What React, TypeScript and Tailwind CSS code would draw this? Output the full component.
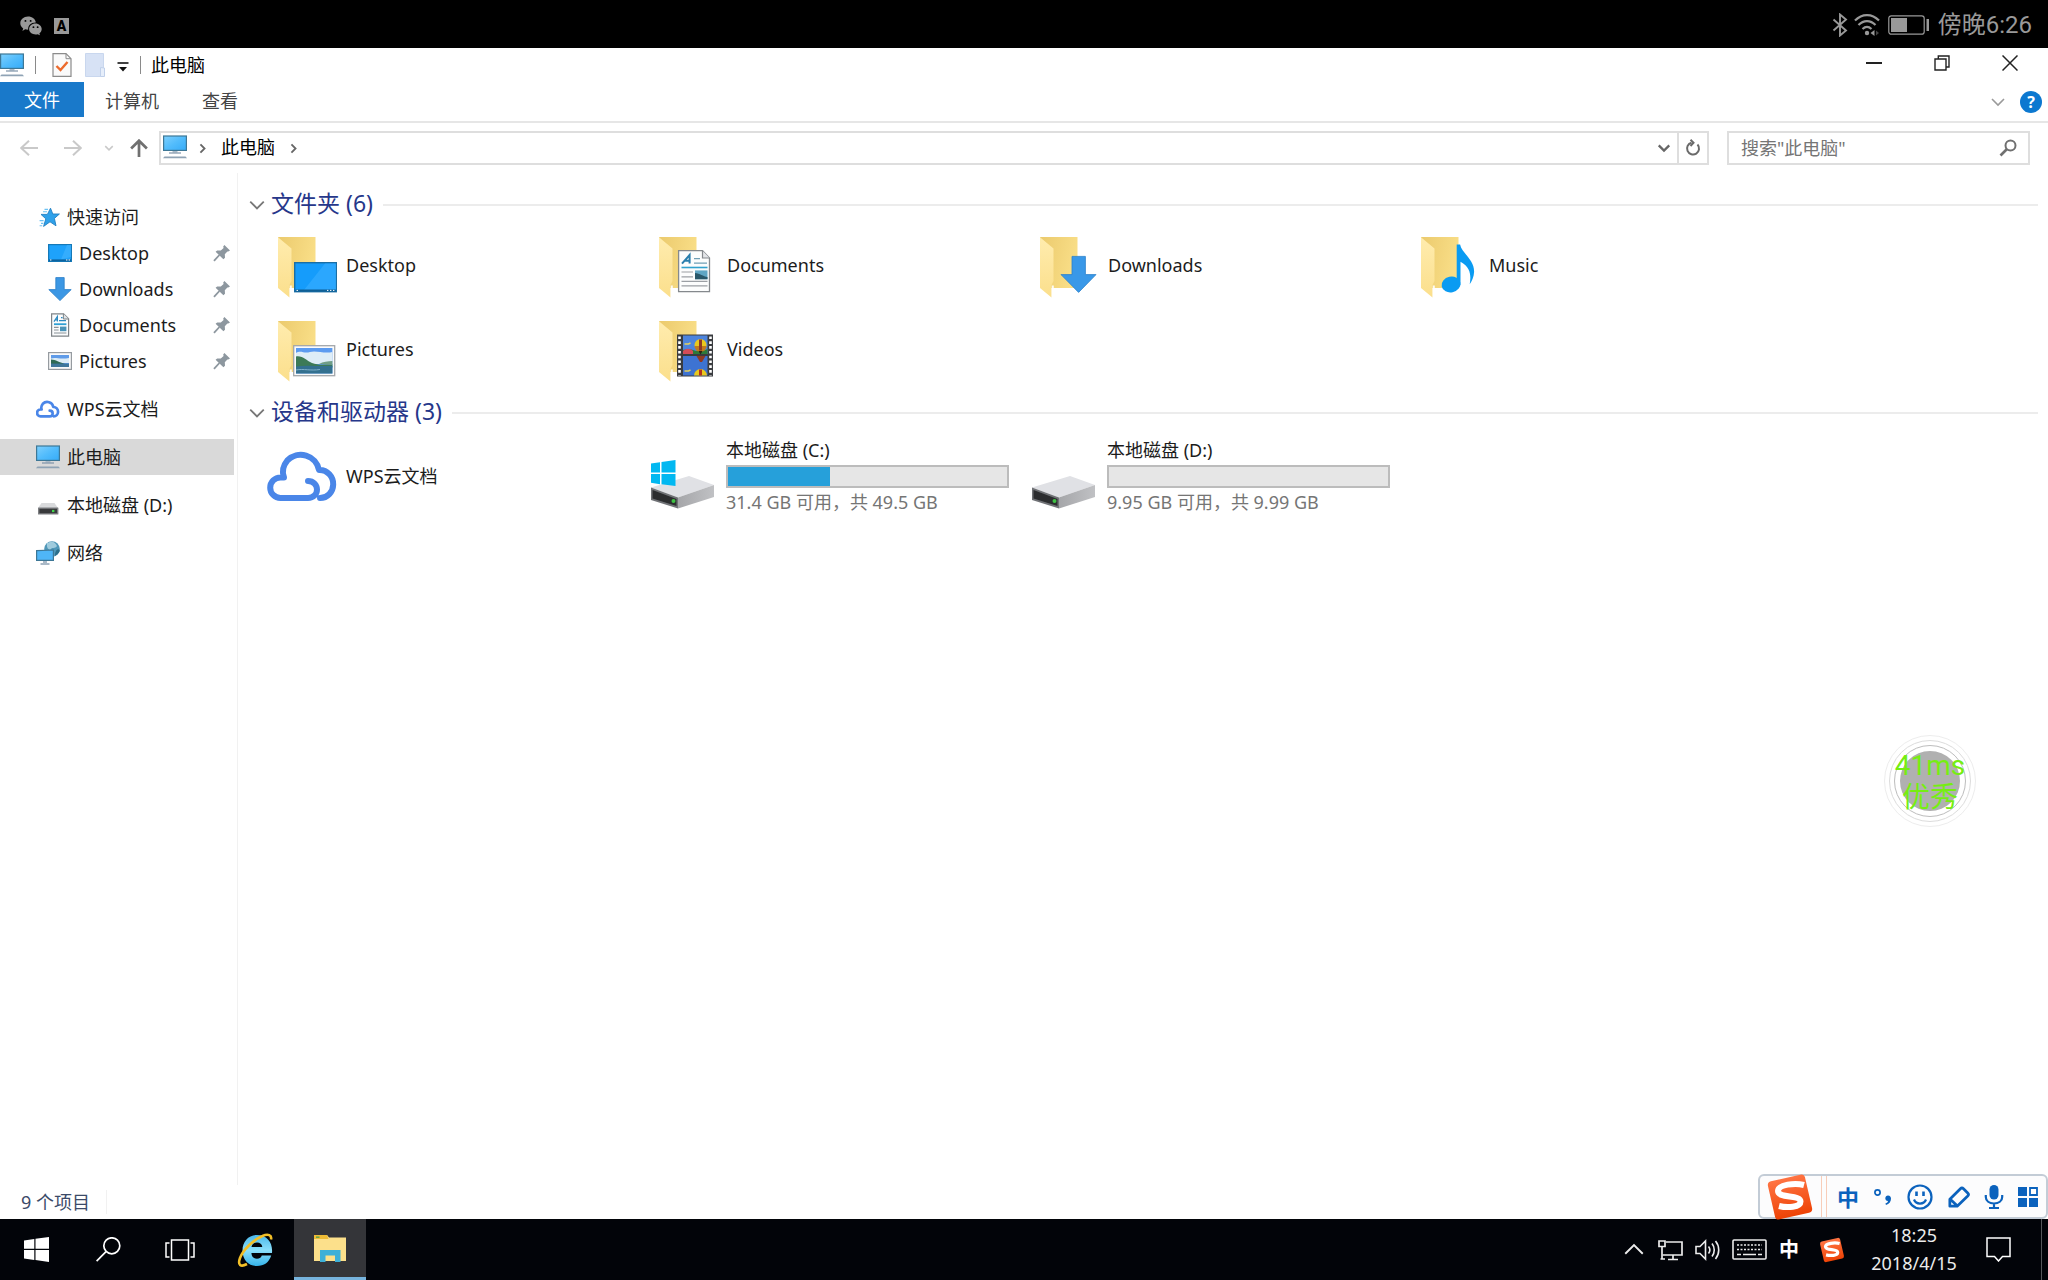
import type { ReactNode } from "react";

type IconProps = { className?: string };

/* ---------- small icons ---------- */

function ComputerIcon({ className = "h-6 w-6" }: IconProps) {
  return (
    <svg viewBox="0 0 24 24" className={className} aria-hidden="true">
      <defs>
        <linearGradient id="screen" x1="0" y1="0" x2="1" y2="1">
          <stop offset="0" stopColor="#7fd0fd" />
          <stop offset="0.5" stopColor="#52bcfc" />
          <stop offset="1" stopColor="#35abf8" />
        </linearGradient>
      </defs>
      <rect x="0.6" y="1" width="22.8" height="14.4" fill="url(#screen)" stroke="#3d7796" strokeWidth="1.2" />
      <path d="M9.5 16h5v1.6h-5z" fill="#aab9c6" />
      <path d="M6 17.4h12v1.2H6z" fill="#7d93a8" />
      <path d="M1.5 21.4h21l1.5 1.8H0z" fill="#8fa3b5" />
    </svg>
  );
}

function DesktopIcon() {
  return (
    <svg viewBox="0 0 24 24" className="h-6 w-6" aria-hidden="true">
      <rect x="0.6" y="3.6" width="22.8" height="16.8" fill="#1ea2fb" stroke="#1579b8" strokeWidth="1.2" />
      <path d="M23 4v12L13 18.4 19 4z" fill="#43b4ff" opacity="0.6" />
      <path d="M1 18.4h22v1.8H1z" fill="#0d639e" />
      <path d="M2 19h1.4M18 19h1.4M20.6 19H22" stroke="#fff" />
    </svg>
  );
}

function DownloadIcon() {
  return (
    <svg viewBox="0 0 24 24" className="h-6 w-6" aria-hidden="true">
      <path d="M7.8 0.6h8.4v12h7L12 23.6 0.8 12.6h7z" fill="#3c97e4" stroke="#2a7dc6" strokeWidth="0.8" />
    </svg>
  );
}

function DocumentIcon() {
  return (
    <svg viewBox="0 0 24 24" className="h-6 w-6" aria-hidden="true">
      <path d="M3.6 0.8h12l5 5v17.4h-17z" fill="#fbfcfd" stroke="#7f8488" strokeWidth="1.2" />
      <path d="M15.4 0.8v5.2h5.2" fill="#dfe3e6" stroke="#7f8488" />
      <path d="M6 8.6 9.4 3.4V8.6M7.4 6.8h2M11 7.6h7M13 4.6h1.6" stroke="#2d8ac0" strokeWidth="1.2" fill="none" />
      <path d="M6 11.2h12.4" stroke="#2fa0d4" strokeWidth="1.8" />
      <path d="M6 14.4h4.6M6 17h4.6M6 20h12.4" stroke="#8a9298" strokeWidth="1.1" />
      <path d="M12 13.6h6.4v4.6H12z" fill="#4a93b8" />
    </svg>
  );
}

function PictureIcon() {
  return (
    <svg viewBox="0 0 24 24" className="h-6 w-6" aria-hidden="true">
      <rect x="0.6" y="3.6" width="22.8" height="16.8" fill="#fafafa" stroke="#969ba0" strokeWidth="1.2" />
      <path d="M3 6h18v12H3z" fill="#5f9be8" />
      <path d="M3 9.6c4-2 8 1 18-.6v5H3z" fill="#dcecf6" />
      <path d="M3 10.6c5 0 8 3 14 4.4H3z" fill="#2f6a54" />
      <path d="M3 14.6h18V18H3z" fill="#40779b" />
    </svg>
  );
}

function StarIcon() {
  return (
    <svg viewBox="0 0 24 24" className="h-6 w-6" aria-hidden="true">
      <path d="M14.5 3.2 16.8 9h6.6l-5 4.4 1.6 7.4-6-4-6.4 4.6 2.2-7.6-4.8-4.4h6.4z" fill="#2fa1ea" stroke="#2380c2" strokeWidth="0.9" />
      <path d="M8.5 4.4H12M7 6.8h4M3.6 15.6h4M5 18.4h2.4M3.6 20.8h2.6" stroke="#6cc2f4" strokeWidth="1.1" />
    </svg>
  );
}

function CloudIcon({ className = "h-6 w-6", stroke = 8 }: { className?: string; stroke?: number }) {
  return (
    <svg viewBox="0 0 72 72" className={className} fill="none" stroke="#4a86e8" strokeLinecap="round" strokeLinejoin="round" aria-hidden="true">
      <path
        d="M41 41c5.500 0 9 4 9 8.500S46.500 58 41 58H13.500A10.300 10.300 0 0 1 13.500 37.400H17c-2-5-1-11.600 3.400-17A18.600 18.600 0 0 1 52 30C60.500 29.600 66.500 37 66.200 44.600 66 52 60.500 58 53 58"
        strokeWidth={stroke}
      />
    </svg>
  );
}

function SmallDriveIcon() {
  return (
    <svg viewBox="0 0 24 24" className="h-6 w-6" aria-hidden="true">
      <path d="M5.500 10h13l3.500 5H2z" fill="#d9dadc" />
      <rect x="2" y="14.500" width="20.400" height="7" rx="0.600" fill="#7d7f82" />
      <rect x="3.400" y="15.800" width="17.600" height="4.400" fill="#38393b" />
      <path d="M16 18h2.400" stroke="#43d44b" strokeWidth="2.200" />
    </svg>
  );
}

function NetworkIcon() {
  return (
    <svg viewBox="0 0 24 24" className="h-6 w-6" aria-hidden="true">
      <circle cx="16" cy="8" r="7.800" fill="#4f97b8" />
      <path d="M12 2c4-3 8 0 9 3-2 3-5 1-6 3s-5 0-4-6z" fill="#9fcbdd" />
      <path d="M20 10c1-2 3-2 3.600-1s-.6 4-4.600 6c0-2 0-3 1-5z" fill="#2c6f8b" />
      <path d="M0.600 9.600 17.400 9v10.400H0.600z" fill="#4fb6f7" stroke="#3d7796" strokeWidth="1.200" />
      <path d="M4.500 23h9M7 21h4" stroke="#8fa3b5" strokeWidth="1.400" />
    </svg>
  );
}

function PinIcon() {
  return (
    <svg viewBox="0 0 18 18" className="h-[18px] w-[18px]" aria-hidden="true">
      <path d="M11.400 1 17 6.400l-1.800 1.200-.8-.2-2.600 2.800.2 3.600-1.600 1.400L2.600 7.800l1.600-1.400 3.600.2L10.600 4l-.4-1.600z" fill="#8d979f" />
      <path d="M6.400 11 1 16.800" stroke="#8d979f" strokeWidth="1.800" />
    </svg>
  );
}

function Chevron({ className = "", d = "m2 5 6 6 6-6", width = 1.6 }: { className?: string; d?: string; width?: number }) {
  return (
    <svg viewBox="0 0 16 16" className={className} fill="none" stroke="currentColor" strokeWidth={width} aria-hidden="true">
      <path d={d} />
    </svg>
  );
}

function SogouIcon({ className = "" }: IconProps) {
  return (
    <svg viewBox="0 0 48 48" className={className} aria-hidden="true">
      <defs>
        <linearGradient id="sogou" x1="0" y1="0" x2="0" y2="1">
          <stop offset="0" stopColor="#ff7443" />
          <stop offset="1" stopColor="#ee4306" />
        </linearGradient>
      </defs>
      <rect x="5" y="4.500" width="38" height="39" rx="4" fill="url(#sogou)" transform="rotate(-13 24 24)" />
      <path
        d="M38 12c-9-2.400-26-.5-26 6 0 7.500 22.500 3.500 22.500 10.500 0 6-13.500 6.500-21.500 4.500"
        fill="none"
        stroke="#fff"
        strokeWidth="6"
      />
    </svg>
  );
}

/* ---------- large tile icons ---------- */

function FolderTile({ children }: { children: ReactNode }) {
  return (
    <svg viewBox="0 0 72 72" className="h-[72px] w-[72px] shrink-0" aria-hidden="true">
      <defs>
        <linearGradient id="folderBack" x1="0" y1="0" x2="1" y2="0.300">
          <stop offset="0" stopColor="#ebca6d" />
          <stop offset="1" stopColor="#f9de87" />
        </linearGradient>
        <linearGradient id="folderFlap" x1="0" y1="0" x2="0" y2="1">
          <stop offset="0" stopColor="#ffecae" />
          <stop offset="1" stopColor="#fbdf8c" />
        </linearGradient>
      </defs>
      <path d="M11 8h37.500v51H22z" fill="url(#folderBack)" />
      <path d="M11 8.200 24.500 19.500V52L22.500 56v12.500L11 59z" fill="url(#folderFlap)" />
      <path d="M22.800 56.500h2v10.500l-2 1.200z" fill="#fff" opacity="0.900" />
      {children}
    </svg>
  );
}

const desktopArt = (
  <>
    <rect x="27.700" y="33.700" width="41.600" height="29" fill="#159cfb" stroke="#1a6ea5" strokeWidth="1.400" />
    <path d="M69 34.400V61H37L58 34.400z" fill="#35adff" opacity="0.700" />
    <path d="M28.400 60.600h40.400v1.800H28.400z" fill="#0f5f95" />
    <path d="M29.500 61.400H31M60 61.400h1.400M63 61.400h1.400M66 61.400h1.400" stroke="#fff" />
  </>
);

const documentArt = (
  <>
    <path d="M30.600 21.700H54.500l7 7.300v33.600H30.600z" fill="#fcfdfd" stroke="#85898d" strokeWidth="1.300" />
    <path d="M54.500 21.700v7.300h7" fill="#e3e5e8" stroke="#85898d" strokeWidth="1.200" />
    <path d="M34 34.600 41.600 26V34.600M36.600 31.800h5" fill="none" stroke="#2a7fae" strokeWidth="2" />
    <path d="M46 29.600h6M46 34.200h13" stroke="#6f9fb5" strokeWidth="1.200" />
    <path d="M33.500 38.500h26" stroke="#31a2ce" strokeWidth="1.600" />
    <path d="M33.500 43h11.500M33.500 47.800h11.500M33.500 52.400h26M33.500 56.800h26" stroke="#9b9fa4" strokeWidth="1.200" />
    <path d="M47 41.400h12.500v8.800H47z" fill="#5fa6c4" />
    <path d="M47 44c5 .4 8 3.500 12.500 4v2.200H47z" fill="#29586a" />
  </>
);

const downloadArt = (
  <path d="M43 27.400h13.400v18.200H67L49.600 63.400 32 45.600h11z" fill="#3998e8" stroke="#2b80c9" strokeWidth="0.800" />
);

const musicArt = (
  <>
    <ellipse cx="41" cy="55.500" rx="9.500" ry="7.800" fill="#0a9bf2" transform="rotate(-12 41 55.500)" />
    <path d="M46.700 15.500h3.400c1.400 8.500 14.400 15 14 27.500-.2 5-2.200 9-4.400 12.200 1-6 2.400-16.500-9.200-22.400V56h-3.800z" fill="#0a9bf2" />
  </>
);

const pictureArt = (
  <>
    <rect x="26.700" y="32.700" width="41" height="30" fill="#fbfbfb" stroke="#a3a7ab" strokeWidth="1.300" />
    <path d="M29 35h36.400v25.500H29z" fill="#5c9bf0" />
    <path d="M29 40c5-3 8 1 14-1s14 2 22.400 0v12H29z" fill="#deedf7" />
    <path d="M29 43.500c7-1 10 4 16 6.500s12 1.500 20.400 1.500v3H29z" fill="#3c7a56" />
    <path d="M52 51c4-2.500 9-2.500 13.400-3v4z" fill="#6f9d86" />
    <path d="M29 53.500c12-2 22 .5 36.400-.8v7.800H29z" fill="#33708f" />
    <path d="M29 57c8-1.500 14 1 24-.5" stroke="#7fb0c9" fill="none" />
  </>
);

const videoArt = (
  <>
    <rect x="29" y="21.500" width="36" height="42" fill="#3a3c40" />
    <path d="M31.500 23.500v39M62.500 23.500v39" stroke="#fff" strokeWidth="2.600" strokeDasharray="2.600 2.200" />
    <path d="M35 22.500h24.500v18.500H35z" fill="#4d84dd" />
    <path d="M35 43h24.500v19.500H35z" fill="#3d73d2" />
    <path d="M35 37c4-1 8-1 10 0s8 2 14.500-1v5H35z" fill="#2d7a39" />
    <path d="M35 38c3-3 7-3 10 0v3H35z" fill="#d34c58" />
    <path d="M36.500 31h4l2-1M36.500 58h4l2-1" stroke="#e3cf5d" strokeWidth="1.400" fill="none" />
    <circle cx="52.500" cy="32" r="6" fill="#e9c81e" />
    <path d="M46.500 33a6 6 0 0 0 12 0z" fill="#c27a1c" />
    <path d="M51 26.500h3v11h-3z" fill="#8f3a24" />
    <path d="M50.500 38h4l-2 3.500z" fill="#2b2412" />
    <path d="M48.500 43h9l-3.500 6h-2z" fill="#8f3a24" />
    <path d="M46 62.500a6.500 6.500 0 0 1 13 0z" fill="#e9c81e" />
    <path d="M51 56.500h3v6h-3z" fill="#b5341c" />
  </>
);

function DriveTile({ system = false }: { system?: boolean }) {
  return (
    <svg viewBox="0 0 72 72" className="h-[72px] w-[72px] shrink-0" aria-hidden="true">
      <defs>
        <linearGradient id="driveSide" x1="0" y1="0" x2="1" y2="0">
          <stop offset="0" stopColor="#a5a6a9" />
          <stop offset="1" stopColor="#c0c1c4" />
        </linearGradient>
      </defs>
      <path d="M3 47.500 41 36l25 9-36 12.500z" fill="#e0e1e5" />
      <path d="M30 57.500 66 45v12L30 68.500z" fill="url(#driveSide)" />
      <path d="M3 47.500l27 10v11L3 60z" fill="#707276" />
      <path d="M4.500 50 28.500 59v7L4.500 58.500z" fill="#2c2d2f" />
      <circle cx="25.500" cy="61" r="2" fill="#3fc144" />
      {system && (
        <path
          d="M3 23.600 12 22.200v10.300H3zM13.500 22 27.500 20v12.500h-14zM3 34h9v10.300L3 42.800zM13.500 34h14v12l-14-1.700z"
          fill="#02b8f1"
        />
      )}
    </svg>
  );
}

/* ---------- data ---------- */

const quickAccess = [
  { name: "Desktop", icon: <DesktopIcon /> },
  { name: "Downloads", icon: <DownloadIcon /> },
  { name: "Documents", icon: <DocumentIcon /> },
  { name: "Pictures", icon: <PictureIcon /> },
];

const places = [
  { name: "WPS云文档", icon: <CloudIcon />, active: false },
  { name: "此电脑", icon: <ComputerIcon />, active: true },
  { name: "本地磁盘 (D:)", icon: <SmallDriveIcon />, active: false },
  { name: "网络", icon: <NetworkIcon />, active: false },
];

const folders = [
  { name: "Desktop", art: desktopArt },
  { name: "Documents", art: documentArt },
  { name: "Downloads", art: downloadArt },
  { name: "Music", art: musicArt },
  { name: "Pictures", art: pictureArt },
  { name: "Videos", art: videoArt },
];

const drives = [
  { name: "本地磁盘 (C:)", free: "31.4 GB 可用，共 49.5 GB", used: 36.6, system: true },
  { name: "本地磁盘 (D:)", free: "9.95 GB 可用，共 9.99 GB", used: 0, system: false },
];

/* ---------- sections ---------- */

function PhoneStatusBar() {
  return (
    <header className="flex h-12 items-center justify-between bg-black pr-4 pl-5 text-[#999999]">
      <div className="flex items-center gap-3 pt-1">
        <svg viewBox="0 0 22 20" className="h-5 w-[22px]" aria-label="WeChat">
          <path d="M8 .5c4.200 0 7.500 2.600 7.800 6-4.600-.2-8 2.900-7.600 7.100-1 .1-2-.1-3-.4L2.400 15l.8-2.600C1.200 11.100.3 9.200.3 7.200.3 3.500 3.700.5 8 .5z" fill="currentColor" />
          <path d="M15.400 7.500c3.600 0 6.300 2.500 6.300 5.500 0 1.800-.9 3.200-2.300 4.300l.5 2-2.200-1.100c-4.600 1-8.600-1.500-8.600-5.200 0-3 2.700-5.500 6.300-5.500z" fill="currentColor" />
          <path d="M5.400 4.900h.1M10.600 4.900h.1M13.400 11.200h.1M17.600 11.200h.1" stroke="#000" strokeWidth="1.800" strokeLinecap="round" />
        </svg>
        <span className="flex h-4 w-[15px] items-center justify-center bg-[#999999] font-['Roboto',sans-serif] text-sm leading-4 font-black text-black">
          A
        </span>
      </div>
      <div className="flex items-center pt-[2px]">
        <svg viewBox="0 0 16 24" className="mr-1.5 h-6 w-4" fill="none" stroke="currentColor" strokeWidth="1.900" aria-label="Bluetooth">
          <path d="m1.500 6.500 12.500 11L8 22.500v-21l6 5-12.500 11" />
        </svg>
        <svg viewBox="0 0 26 24" className="mr-2 h-6 w-[26px]" fill="none" stroke="currentColor" strokeWidth="2.200" aria-label="Wi-Fi">
          <path d="M1 7.500c7-7.300 17-7.300 24 0M4.500 12c5-5.200 12-5.200 17 0M8.500 16c3-2.800 6-2.800 9 0" />
          <circle cx="13" cy="20" r="2.200" fill="currentColor" stroke="none" />
          <path d="m20.500 17-4 3 4 3z" fill="currentColor" stroke="none" />
          <path d="m22 17.500 3 2.500-3 2.500z" fill="#444" stroke="none" />
        </svg>
        <svg viewBox="0 0 42 20" className="mr-2 h-5 w-[42px]" aria-label="Battery">
          <rect x="0.800" y="0.800" width="35.400" height="18.400" rx="2.500" fill="none" stroke="currentColor" strokeWidth="1.200" />
          <path d="M3 3h16v14H3zM38.500 4H41v12h-2.500z" fill="currentColor" />
        </svg>
        <span className="font-['Roboto','Noto_Sans_CJK_SC',sans-serif] text-2xl leading-8">傍晚6:26</span>
      </div>
    </header>
  );
}

function TitleBar() {
  return (
    <div className="flex h-[34px] items-center justify-between pr-1">
      <div className="flex items-center">
        <ComputerIcon />
        <span className="ml-[11px] h-[18px] w-px bg-[#8a8a8a]" />
        <button aria-label="属性" className="ml-4">
          <svg viewBox="0 0 20 24" className="h-6 w-5">
            <path d="M1 .7h13l5 5v17.600H1z" fill="#fafafa" stroke="#8b8b8b" strokeWidth="1.200" />
            <path d="M14 .7v5h5" fill="none" stroke="#8b8b8b" />
            <path d="m4.500 13 4 4 7-8" fill="none" stroke="#ec6a2c" strokeWidth="2.400" />
          </svg>
        </button>
        <button aria-label="新建文件夹" className="ml-[13px]">
          <svg viewBox="0 0 20 24" className="h-6 w-5">
            <path d="M.5.500h18v23H.5z" fill="#d7e2f5" stroke="#c9d7ee" />
            <path d="M15.500 23.500v-9l4 .5v8.500z" fill="#e6eefa" stroke="#c0d0ea" />
          </svg>
        </button>
        <button aria-label="自定义快速访问工具栏" className="ml-3 pt-1">
          <svg viewBox="0 0 12 12" className="h-3 w-3">
            <path d="M.5 2h11" stroke="#111" strokeWidth="1.600" />
            <path d="M2 6h8l-4 4.500z" fill="#111" />
          </svg>
        </button>
        <span className="ml-[11px] h-[18px] w-px bg-[#8a8a8a]" />
        <h1 className="ml-[10px] text-lg leading-6 text-black">此电脑</h1>
      </div>
      <div className="flex h-[30px] self-start">
        <button aria-label="最小化" className="flex w-[68px] items-center justify-center">
          <span className="h-[2px] w-4 bg-[#222]" />
        </button>
        <button aria-label="还原" className="flex w-[68px] items-center justify-center">
          <svg viewBox="0 0 16 16" className="h-4 w-4" fill="none" stroke="#222" strokeWidth="1.400">
            <path d="M1 4h11v11H1zM4.300 4V1H15v11h-3" />
          </svg>
        </button>
        <button aria-label="关闭" className="flex w-[68px] items-center justify-center">
          <svg viewBox="0 0 16 16" className="h-4 w-4" fill="none" stroke="#222" strokeWidth="1.500">
            <path d="m.5.500 15 15M15.500.500l-15 15" />
          </svg>
        </button>
      </div>
    </div>
  );
}

function RibbonTabs() {
  return (
    <nav className="flex h-[41px] items-start justify-between border-b-2 border-[#e6e6e6] text-lg text-[#444444]">
      <div className="flex h-[35px]">
        <button className="w-[84px] bg-[#1979ca] leading-9 text-white">文件</button>
        <button className="w-24 leading-[38px]">计算机</button>
        <button className="w-20 leading-[38px]">查看</button>
      </div>
      <div className="flex h-10 items-center gap-[14px] pr-[6px]">
        <button aria-label="展开功能区" className="text-[#9a9a9a]">
          <Chevron className="h-4 w-4" />
        </button>
        <button aria-label="帮助" className="h-[22px] w-[22px] rounded-full bg-[#0c78d0] text-center text-base leading-[22px] font-bold text-white">
          ?
        </button>
      </div>
    </nav>
  );
}

function AddressBar() {
  return (
    <div className="flex h-[50px] items-center pr-[18px] pl-5">
      <div className="flex w-[139px] items-center text-[#c9c9c9]">
        <button aria-label="后退">
          <Chevron className="h-[18px] w-[18px]" d="M16 8H1M8 1.500 1 8l7 6.500" width={1.8} />
        </button>
        <button aria-label="前进" className="ml-[26px]">
          <Chevron className="h-[18px] w-[18px]" d="M0 8h15M8 1.500 15 8l-7 6.500" width={1.8} />
        </button>
        <button aria-label="最近位置" className="ml-[22px]">
          <Chevron className="h-[10px] w-[10px]" width={2.4} />
        </button>
        <button aria-label="上移" className="ml-4 text-[#707070]">
          <Chevron className="h-[18px] w-[18px]" d="M8 16V1.500M1 8.500l7-7 7 7" width={2.4} />
        </button>
      </div>
      <div className="flex h-[34px] flex-1 items-center border-2 border-[#dedede]">
        <span className="ml-[2px] pb-[2px]">
          <ComputerIcon />
        </span>
        <Chevron className="ml-[10px] h-[11px] w-[11px] text-[#666]" d="m5 2 6 6-6 6" width={2.6} />
        <a href="#this-pc" className="mx-[13px] pb-[2px] text-lg leading-6 text-black">此电脑</a>
        <Chevron className="h-[11px] w-[11px] text-[#666]" d="m5 2 6 6-6 6" width={2.6} />
        <button aria-label="历史记录" className="mr-[6px] ml-auto text-[#666]">
          <Chevron className="h-[14px] w-[14px]" width={2.6} />
        </button>
        <button aria-label="刷新" className="flex h-full w-[30px] items-center justify-center border-l-2 border-[#dedede]">
          <svg viewBox="0 0 18 18" className="h-[18px] w-[18px]" fill="none" stroke="#6a6a6a" strokeWidth="2">
            <path d="M13.500 5.500A6 6 0 1 1 7.500 3.700" />
            <path d="M6.500 0.800 9.500 3.800 6.500 7" />
          </svg>
        </button>
      </div>
      <label className="ml-[18px] flex h-[34px] w-[303px] items-center border-2 border-[#dedede] pr-[11px] pl-3">
        <input
          type="search"
          aria-label="搜索此电脑"
          placeholder={'搜索"此电脑"'}
          className="min-w-0 flex-1 text-lg leading-6 outline-none placeholder:text-[#757575]"
        />
        <svg viewBox="0 0 18 18" className="h-[18px] w-[18px]" fill="none" stroke="#707070" aria-hidden="true">
          <circle cx="11.500" cy="6.500" r="5" strokeWidth="2" />
          <path d="M8 10 1.500 16.500" strokeWidth="2.600" />
        </svg>
      </label>
    </div>
  );
}

function Sidebar() {
  return (
    <aside className="w-[238px] shrink-0 border-r border-[#f1f1f1] pt-[26px] text-lg text-[#1c1c1c]">
      <a href="#quick" className="flex h-9 items-center gap-[7px] pl-9">
        <StarIcon />
        快速访问
      </a>
      {quickAccess.map((q) => (
        <a key={q.name} href={`#${q.name}`} className="flex h-9 items-center pr-[6px] pl-12">
          {q.icon}
          <span className="ml-[7px] flex-1">{q.name}</span>
          <PinIcon />
        </a>
      ))}
      {places.map((p) => (
        <a
          key={p.name}
          href={`#${p.name}`}
          className={`mt-3 mr-[3px] flex h-9 items-center gap-[7px] pl-9 ${p.active ? "bg-[#d9d9d9]" : ""}`}
        >
          {p.icon}
          {p.name}
        </a>
      ))}
    </aside>
  );
}

function GroupHeading({ title }: { title: string }) {
  return (
    <h2 className="flex h-9 items-center pl-[10px] text-[23px] leading-8 text-[#26378a]">
      <button aria-label="折叠" className="mr-[5px] text-[#777]">
        <Chevron className="h-[18px] w-[18px]" />
      </button>
      <span className="pb-1">{title}</span>
      <span className="ml-[10px] h-[2px] flex-1 bg-[#ececec]" />
    </h2>
  );
}

function Content() {
  return (
    <main className="flex-1 pt-[14px] pr-[10px]">
      <GroupHeading title="文件夹 (6)" />
      <div className="grid grid-cols-[repeat(auto-fill,381px)] pl-[29px] text-lg text-[#1c1c1c]">
        {folders.map((f) => (
          <a key={f.name} href={`#${f.name}`} className="flex h-[84px] items-center gap-[7px]">
            <FolderTile>{f.art}</FolderTile>
            {f.name}
          </a>
        ))}
      </div>
      <div className="mt-1">
        <GroupHeading title="设备和驱动器 (3)" />
      </div>
      <div className="mt-[3px] grid grid-cols-[repeat(auto-fill,381px)] pl-[29px] text-lg text-[#1c1c1c]">
        <a href="#wps" className="flex h-[84px] items-center gap-[7px]">
          <CloudIcon className="h-[72px] w-[72px] shrink-0" stroke={6} />
          WPS云文档
        </a>
        {drives.map((d) => (
          <a key={d.name} href={`#${d.name}`} className="flex h-[84px] items-center gap-[6px]">
            <DriveTile system={d.system} />
            <div>
              <p className="leading-7">{d.name}</p>
              <div
                role="meter"
                aria-label={d.name}
                aria-valuenow={d.used}
                className="mt-px h-[23px] w-[283px] border-2 border-[#bcbcbc] bg-[#e6e6e6]"
              >
                <div className="h-full bg-[#26a0da]" style={{ width: `${d.used}%` }} />
              </div>
              <p className="leading-7 text-[#757575]">{d.free}</p>
            </div>
          </a>
        ))}
      </div>
    </main>
  );
}

function LatencyBall() {
  return (
    <button className="absolute top-[735px] right-[72px] flex h-[92px] w-[92px] items-center justify-center rounded-full border border-[#ededed]">
      <span className="flex h-[82px] w-[82px] items-center justify-center rounded-full border border-[#dcdcdc]">
        <span className="flex h-[72px] w-[72px] items-center justify-center rounded-full border border-[#bdbdbd]">
          <span className="flex h-[60px] w-[60px] flex-col items-center justify-center rounded-full bg-[#b0b0b0] pt-[2px] font-['Roboto','Noto_Sans_CJK_SC',sans-serif] text-[28px] leading-8 text-[#76ee12]">
            <span>41ms</span>
            <span>优秀</span>
          </span>
        </span>
      </span>
    </button>
  );
}

function ImeBar() {
  return (
    <div className="absolute right-0 bottom-0 flex h-[45px] w-[290px] items-center rounded-md border-2 border-[#c3ccd6] bg-[#fcfcfd] text-[#0b62bd]">
      <SogouIcon className="ml-[6px] h-12 w-12" />
      <span className="mr-[10px] ml-[7px] h-full w-[6px] border-x border-[#f8cdb9]" />
      <div className="flex flex-1 items-center justify-between pr-2">
        <button className="text-[22px] leading-8 font-bold">中</button>
        <button aria-label="标点">
          <svg viewBox="0 0 20 20" className="h-5 w-5">
            <circle cx="4.500" cy="5.500" r="2.600" fill="none" stroke="currentColor" strokeWidth="1.700" />
            <path d="M15 8.500c2 0 3 1.300 3 3.300 0 3-2 5.400-5 6.200l-.6-1.400c1.600-.6 2.500-1.500 2.600-2.600-1.700 0-2.700-1.200-2.700-2.700S13.500 8.500 15 8.500z" fill="currentColor" />
          </svg>
        </button>
        <button aria-label="表情">
          <svg viewBox="0 0 26 26" className="h-[26px] w-[26px]" fill="none" stroke="currentColor" strokeWidth="2.200">
            <circle cx="13" cy="13" r="11.500" />
            <path d="M9.500 7.500v4.500M16.500 7.500v4.500" strokeWidth="2.600" />
            <path d="M7 15.500c2 5.400 10 5.400 12 0" />
          </svg>
        </button>
        <button aria-label="手写">
          <svg viewBox="0 0 24 24" className="h-[22px] w-[22px]" fill="none" stroke="currentColor" strokeWidth="3" strokeLinejoin="round">
            <path d="M2 22v-7.500L13.500 3c1-1 2.400-1 3.400 0l4.600 4.600c1 1 1 2.400 0 3.400L10 22zM2.500 14.500l7.500 7" />
          </svg>
        </button>
        <button aria-label="语音">
          <svg viewBox="0 0 20 26" className="h-[26px] w-5" fill="none" stroke="currentColor" strokeWidth="2.200">
            <rect x="5.500" y="1" width="9" height="14.500" rx="4.500" fill="currentColor" stroke="none" />
            <path d="M1.800 11v2c0 4 3.600 6.500 8.200 6.500s8.200-2.500 8.200-6.500v-2M10 19.500V24M5 24h10" />
          </svg>
        </button>
        <button aria-label="工具箱">
          <svg viewBox="0 0 20 20" className="h-5 w-5" fill="currentColor">
            <path d="M0 0h9v9H0zM0 11h9v9H0zM11 11h9v9h-9z" />
            <path d="M12 1h7v7h-7z" fill="#fff" stroke="currentColor" strokeWidth="1.800" />
          </svg>
        </button>
      </div>
    </div>
  );
}

function Taskbar() {
  return (
    <footer className="flex h-[61px] items-stretch justify-between bg-[#020409] text-[#ececec]">
      <div className="flex">
        <button aria-label="开始" className="flex w-[72px] items-center justify-center">
          <svg viewBox="0 0 25 25" className="h-[25px] w-[25px]" fill="#fff">
            <path d="M0 3.500 10.300 2v9.800H0zM11.500 1.800 25 0v11.800H11.500zM0 13h10.300v10L0 21.500zM11.500 13H25v12l-13.500-1.900z" />
          </svg>
        </button>
        <button aria-label="搜索" className="flex w-[72px] items-center justify-center">
          <svg viewBox="0 0 25 25" className="h-[25px] w-[25px]" fill="none" stroke="#fff" strokeWidth="1.700">
            <circle cx="15.800" cy="8.800" r="8" />
            <path d="M10 14.600.6 24.200" />
          </svg>
        </button>
        <button aria-label="任务视图" className="flex w-[72px] items-center justify-center">
          <svg viewBox="0 0 30 22" className="h-[22px] w-[30px]" fill="none" stroke="#fff" strokeWidth="1.500">
            <path d="M6.500 1h17v20h-17zM4.500 4H1v14h3.500M25.500 4H29v14h-3.500" />
          </svg>
        </button>
        <button aria-label="Internet Explorer" className="flex w-[78px] items-center justify-center">
          <svg viewBox="0 0 36 36" className="h-9 w-9" fill="none">
            <defs>
              <linearGradient id="ie" x1="0" y1="0" x2="0" y2="1">
                <stop offset="0" stopColor="#4bb8ea" />
                <stop offset="0.500" stopColor="#8be0fb" />
                <stop offset="1" stopColor="#35b3ea" />
              </linearGradient>
            </defs>
            <path
              d="M20 3C11.500 3 5.500 9.500 5.500 18.500 5.500 28 11.500 34 20 34c7 0 12-3.500 14.200-10.500h-9.400c-.8 2.200-2.500 3.200-4.800 3.200-3.400 0-5.400-2-5.600-5.700H35C36 10.500 30 3 20 3zM14.500 15c.5-3 2.500-4.600 5.500-4.600s5 1.600 5.300 4.600z"
              fill="url(#ie)"
            />
            <path d="M34 7.500c1-4.500-3-6-8.500-3.500C16 8 6 18 3 26c-2.500 7 .5 9.500 7 6" stroke="#f2bf28" strokeWidth="2.600" />
          </svg>
        </button>
        <button aria-label="文件资源管理器" className="flex w-[72px] items-center justify-center border-b-[3px] border-[#76b3dd] bg-[#343539]">
          <svg viewBox="0 0 32 27" className="h-[27px] w-8">
            <path d="M0 0h13l2 2.500h17V26H0z" fill="#fce08b" />
            <path d="M0 0h13l1.500 4H0z" fill="#eebb35" />
            <path d="M2 2.200h3.500" stroke="#67a548" strokeWidth="1.600" />
            <path d="M6 27V15h20.500v12H21v-6.500h-9.500V27z" fill="#3db0d8" />
          </svg>
        </button>
      </div>
      <div className="flex items-center">
        <button aria-label="显示隐藏的图标" className="mr-[14px]">
          <Chevron className="h-5 w-5" d="m1 11 7-7 7 7" width={1.5} />
        </button>
        <svg viewBox="0 0 25 22" className="mr-3 h-[22px] w-[25px]" fill="none" stroke="currentColor" strokeWidth="1.700" aria-label="网络">
          <path d="M8 3h16v13H4.500M15 16v4M10 20.500h10" />
          <path d="M1 2h6v5.500H1zM4 7.500V20M2.500 20H7" />
        </svg>
        <svg viewBox="0 0 25 22" className="mr-3 h-[22px] w-[25px]" fill="none" stroke="currentColor" strokeWidth="1.600" aria-label="音量">
          <path d="M1 7.500h4L10.500 2v18L5 14.500H1zM13.500 7.500c1.600 2 1.600 5 0 7M17 4.500c3 3.800 3 9.200 0 13M20.500 2c4.300 5.300 4.300 12.700 0 18" />
        </svg>
        <svg viewBox="0 0 35 21" className="mr-3 h-[21px] w-[35px]" fill="none" stroke="currentColor" strokeWidth="1.600" aria-label="键盘">
          <rect x="1" y="1" width="33" height="19" rx="1" />
          <path d="M5 6h25M5 10.500h25" strokeDasharray="2 1.500" />
          <path d="M5 15.500h4M11 15.500h13M26 15.500h4" />
        </svg>
        <span className="text-xl leading-8 font-bold text-white">中</span>
        <SogouIcon className="ml-5 h-[26px] w-[26px]" />
        <div className="ml-6 w-[90px] pb-[2px] text-center text-lg leading-7">
          <p>18:25</p>
          <p>2018/4/15</p>
        </div>
        <button aria-label="通知" className="ml-[27px]">
          <svg viewBox="0 0 25 25" className="h-[25px] w-[25px]" fill="none" stroke="#fff" strokeWidth="1.500">
            <path d="M1 1h23v18.500h-7.500L12.500 24 8.500 19.500H1z" />
          </svg>
        </button>
        <span className="ml-[30px] h-full w-[7px] border-l border-[#55575b]" />
      </div>
    </footer>
  );
}

export default function App() {
  return (
    <div className="relative flex min-h-screen flex-col bg-white font-['Noto_Sans','Noto_Sans_CJK_SC',sans-serif]">
      <PhoneStatusBar />
      <TitleBar />
      <RibbonTabs />
      <AddressBar />
      <div className="flex flex-1">
        <Sidebar />
        <Content />
      </div>
      <div className="relative flex h-[34px] items-center px-[21px] text-lg leading-6 text-[#3b4a68]">
        <span className="border-r border-[#f1f1f1] pr-4">9 个项目</span>
        <ImeBar />
      </div>
      <Taskbar />
      <LatencyBall />
    </div>
  );
}
